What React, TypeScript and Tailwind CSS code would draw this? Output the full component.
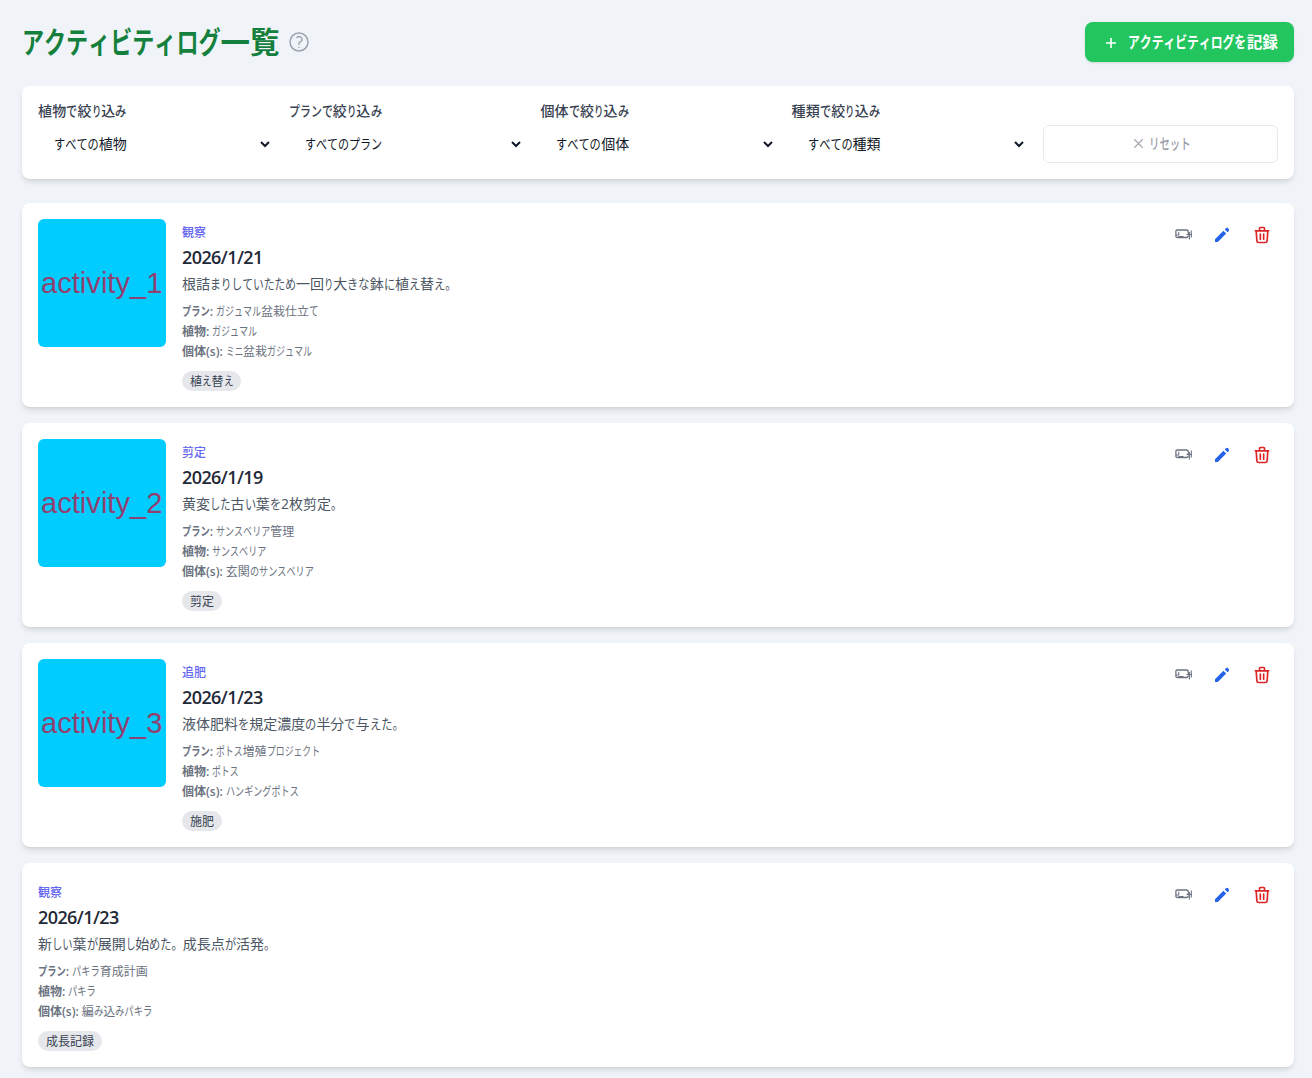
import type { ReactNode } from "react";
import { HiOutlineTrash, HiPencil } from "react-icons/hi";
import { HiOutlineQuestionMarkCircle } from "react-icons/hi2";

interface IActivity {
  id: number;
  image?: string;
  type: string;
  date: string;
  memo: string;
  plan: string;
  plant: string;
  individual: string;
  tag: string;
}

const activities: IActivity[] = [
  {
    id: 1,
    image: "activity_1",
    type: "観察",
    date: "2026/1/21",
    memo: "根詰まりしていたため一回り大きな鉢に植え替え。",
    plan: "ガジュマル盆栽仕立て",
    plant: "ガジュマル",
    individual: "ミニ盆栽ガジュマル",
    tag: "植え替え",
  },
  {
    id: 2,
    image: "activity_2",
    type: "剪定",
    date: "2026/1/19",
    memo: "黄変した古い葉を2枚剪定。",
    plan: "サンスベリア管理",
    plant: "サンスベリア",
    individual: "玄関のサンスベリア",
    tag: "剪定",
  },
  {
    id: 3,
    image: "activity_3",
    type: "追肥",
    date: "2026/1/23",
    memo: "液体肥料を規定濃度の半分で与えた。",
    plan: "ポトス増殖プロジェクト",
    plant: "ポトス",
    individual: "ハンギングポトス",
    tag: "施肥",
  },
  {
    id: 4,
    type: "観察",
    date: "2026/1/23",
    memo: "新しい葉が展開し始めた。成長点が活発。",
    plan: "パキラ育成計画",
    plant: "パキラ",
    individual: "編み込みパキラ",
    tag: "成長記録",
  },
];

const filters = [
  { label: "植物で絞り込み", value: "すべての植物" },
  { label: "プランで絞り込み", value: "すべてのプラン" },
  { label: "個体で絞り込み", value: "すべての個体" },
  { label: "種類で絞り込み", value: "すべての種類" },
];

const kanaWidth = (char: string) => {
  if ("ィュェッりリしトミ".includes(char)) return 0.67;
  if (/[\u3040-\u309f。]/.test(char)) return 0.8;
  return 0.77;
};

// Sets kana narrower than kanji, like a UI font with proportional kana
const Jp = ({ children }: { children: string }) => {
  const runs = children.match(/[\u3040-\u30ff。]+|[^\u3040-\u30ff。]+/g) ?? [];
  return (
    <span className="whitespace-nowrap">
      {runs.map((run, i) => {
        if (!/[\u3040-\u30ff。]/.test(run)) return <span key={i}>{run}</span>;
        const width = [...run].reduce((sum, c) => sum + kanaWidth(c), 0);
        return (
          <span
            key={i}
            className="inline-block origin-left [font-kerning:none]"
            style={{
              width: `${width}em`,
              transform: `scaleX(${width / run.length})`,
            }}
          >
            {run}
          </span>
        );
      })}
    </span>
  );
};

const Detail = ({ label, children }: { label: string; children: string }) => (
  <p className="flex text-xs text-[#6b7280]">
    <span className="mr-[3px] font-semibold">
      <Jp>{label}</Jp>
    </span>
    <Jp>{children}</Jp>
  </p>
);

const IconButton = ({ children }: { children: ReactNode }) => (
  <button className="flex size-8 items-center justify-center rounded-full">
    {children}
  </button>
);

const CopyIcon = () => (
  <svg
    className="size-5 text-[#6b7280]"
    viewBox="0 0 20 20"
    fill="none"
    stroke="currentColor"
    strokeWidth="1.3"
  >
    <path d="M16.3 9V7A2 2 0 0 0 14.3 5H5.2A1.3 1.3 0 0 0 3.9 6.3V11.2A1.3 1.3 0 0 0 5.2 12.5H14.3A2 2 0 0 0 16.3 10.5" />
    <path
      d="M4 10H7.3M6.8 6.8V10M6.5 11.6H11.5M14.5 9.5H20M19.3 5.5V12.5M17.4 7V14.5"
      strokeWidth="1.1"
    />
  </svg>
);

const ActivityCard = ({ activity }: { activity: IActivity }) => (
  <div className="flex h-[204px] gap-4 rounded-lg bg-white p-4 shadow-md">
    {activity.image && (
      <div className="flex size-32 shrink-0 items-center overflow-hidden rounded-md bg-[#00ccff] pt-0.5 pl-[3px] font-['Liberation_Sans'] text-[29px] tracking-[0.05px] text-[#914170]">
        {activity.image}
      </div>
    )}
    <div className="grow pt-1.5">
      <p className="text-xs font-medium text-[#6366f1]">{activity.type}</p>
      <p className="mt-0.5 text-lg font-semibold tracking-[-0.6px] text-[#1f2937]">
        {activity.date}
      </p>
      <p className="mt-[3px] text-sm text-[#4b5563]">
        <Jp>{activity.memo}</Jp>
      </p>
      <div className="mt-2.5 space-y-1">
        <Detail label="プラン:">{activity.plan}</Detail>
        <Detail label="植物:">{activity.plant}</Detail>
        <Detail label="個体(s):">{activity.individual}</Detail>
      </div>
      <div className="mt-[11px] flex">
        <span className="rounded-full bg-[#e5e7eb] px-2 pt-[3px] pb-px text-xs text-[#374151]">
          <Jp>{activity.tag}</Jp>
        </span>
      </div>
    </div>
    <div className="flex gap-2">
      <IconButton>
        <CopyIcon />
      </IconButton>
      <IconButton>
        <HiPencil className="size-5 text-[#2563eb]" />
      </IconButton>
      <IconButton>
        <HiOutlineTrash className="size-5 text-[#dc2626]" />
      </IconButton>
    </div>
  </div>
);

const App = () => {
  return (
    <div className="min-h-screen bg-[#f0f4f8] pt-[22px] pr-[18px] pb-[11px] pl-[22px] font-['Open_Sans','Noto_Sans_CJK_JP',sans-serif]">
      <div className="mb-6 flex h-10 items-center justify-between">
        <div className="flex items-center gap-[7px]">
          <h1 className="text-[29.5px] font-bold text-[#15803d]">
            <Jp>アクティビティログ一覧</Jp>
          </h1>
          <HiOutlineQuestionMarkCircle className="size-6 text-[#9ca3af]" />
        </div>
        <button className="flex h-10 items-center gap-3 rounded-lg bg-[#22c55e] pt-px pr-4 pl-[21px] text-[15.7px] font-bold text-white shadow-sm">
          <svg
            className="size-2.5"
            viewBox="0 0 10 10"
            stroke="currentColor"
            strokeWidth="1.6"
          >
            <path d="M5 0V10M0 5H10" />
          </svg>
          <Jp>アクティビティログを記録</Jp>
        </button>
      </div>

      <div className="mb-6 grid grid-cols-5 items-end gap-4 rounded-lg bg-white p-4 shadow-md">
        {filters.map((filter) => (
          <div key={filter.label}>
            <p className="-mt-px mb-1 text-sm font-medium tracking-[0.2px] text-[#374151]">
              <Jp>{filter.label}</Jp>
            </p>
            <button className="flex h-[38px] w-full items-center justify-between pr-[3px] pl-4 text-sm text-[#111827]">
              <Jp>{filter.value}</Jp>
              <svg
                className="h-2 w-2.5"
                viewBox="0 0 10 8"
                fill="none"
                stroke="currentColor"
                strokeWidth="2"
              >
                <path d="M1 2L5 6L9 2" />
              </svg>
            </button>
          </div>
        ))}
        <button
          disabled
          className="flex h-[38px] items-center justify-center gap-1.5 rounded-md border border-[#d1d5db] pb-0.5 pl-1 text-[15px] font-medium text-[#374151] opacity-50"
        >
          <svg
            className="mt-px size-[9px]"
            viewBox="0 0 9 9"
            stroke="currentColor"
            strokeWidth="1.2"
          >
            <path d="M0.3 0.3L8.7 8.7M8.7 0.3L0.3 8.7" />
          </svg>
          <Jp>リセット</Jp>
        </button>
      </div>

      <div className="space-y-4">
        {activities.map((activity) => (
          <ActivityCard key={activity.id} activity={activity} />
        ))}
      </div>
    </div>
  );
};

export default App;
